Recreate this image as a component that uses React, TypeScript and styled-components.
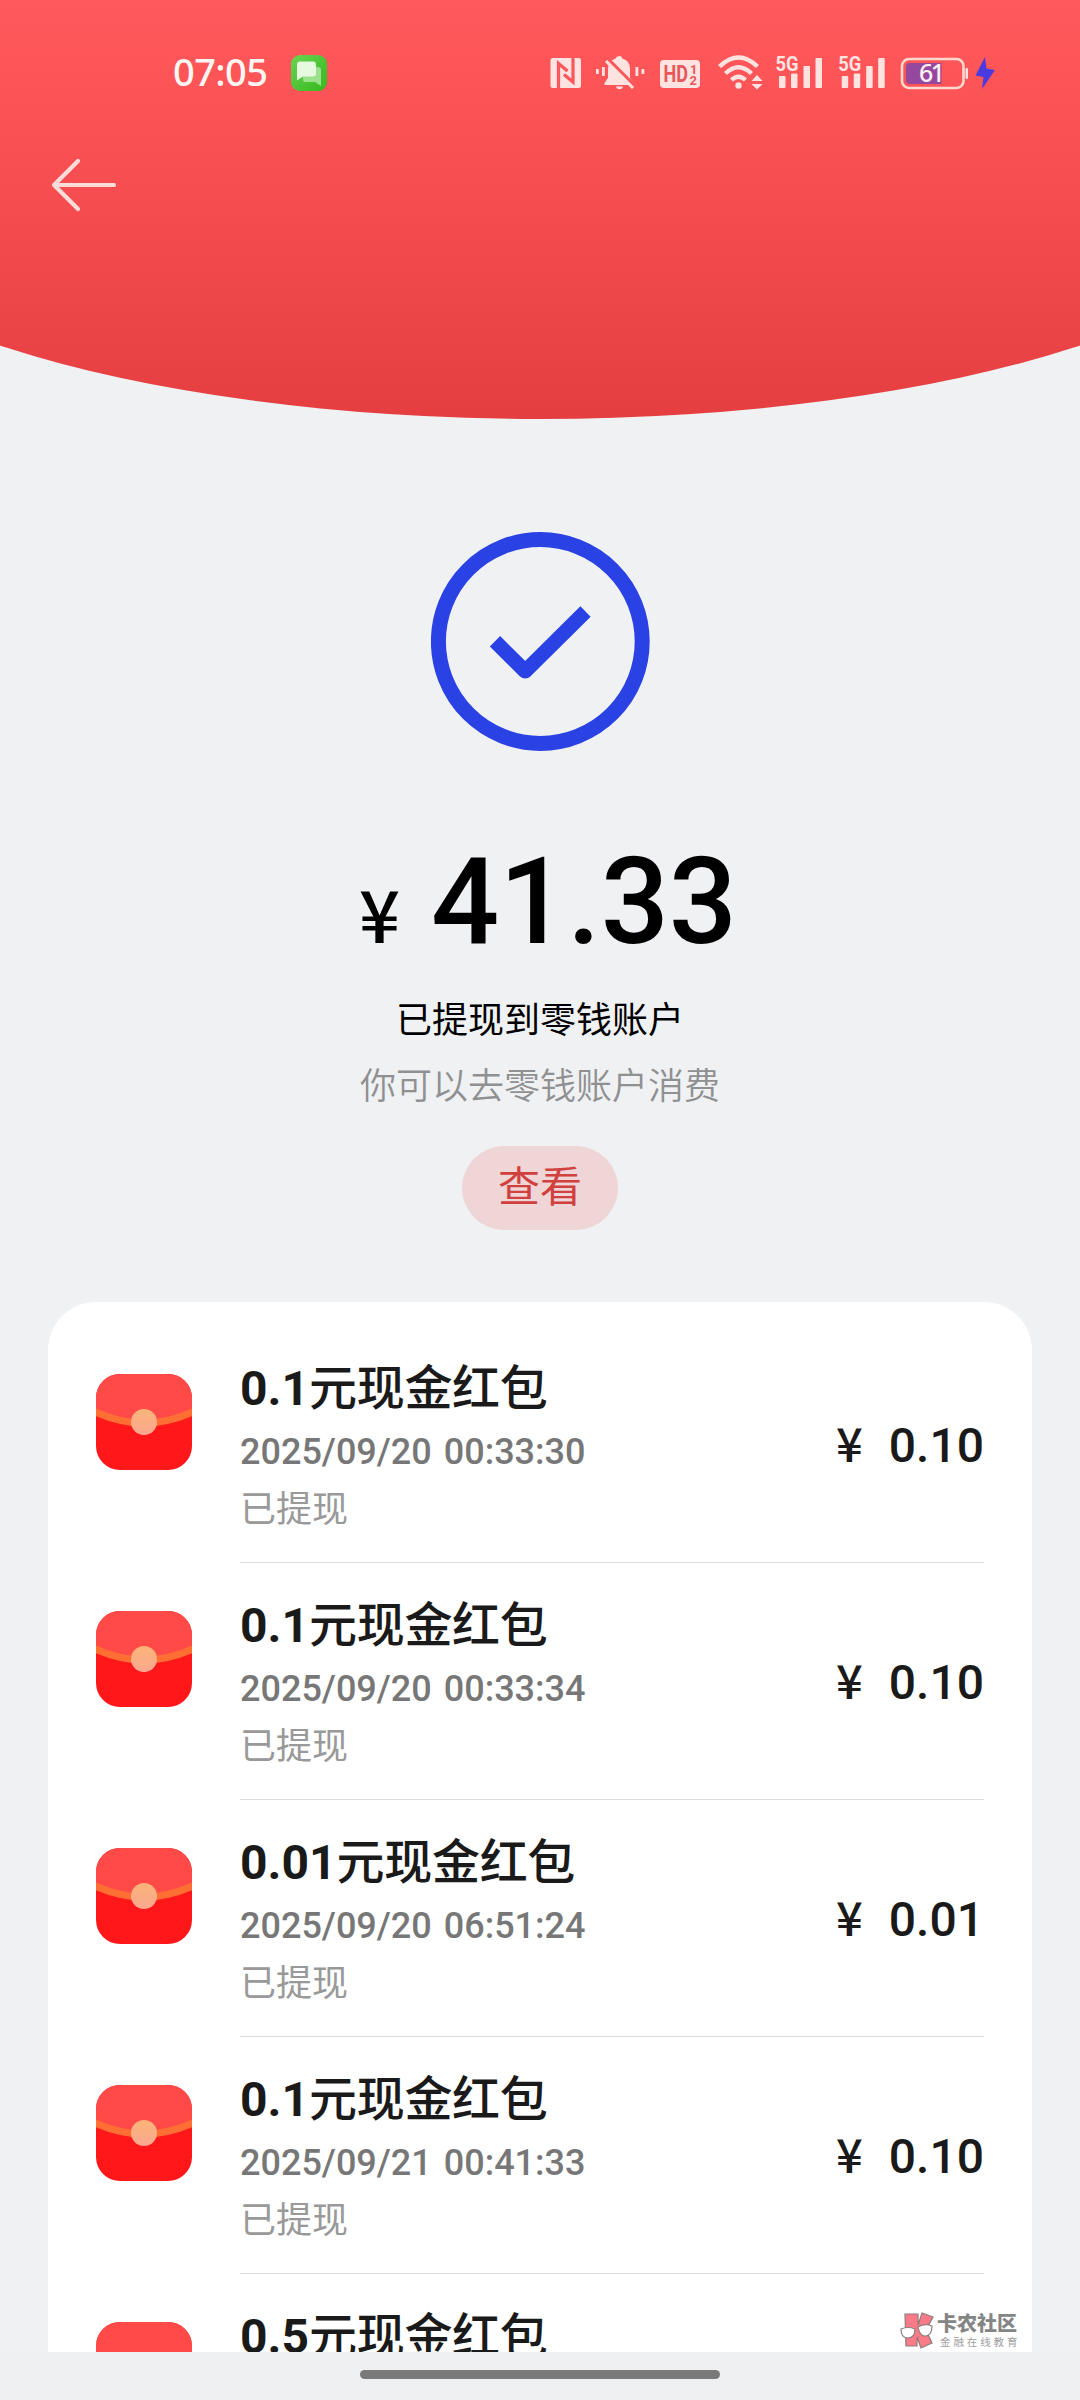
import React from 'react';
import styled, { createGlobalStyle } from 'styled-components';

const GlobalStyle = createGlobalStyle`
  * { box-sizing: border-box; }
  body {
    margin: 0;
    background: #eff0f2;
    font-family: Roboto, "Noto Sans CJK SC", sans-serif;
  }
`;

const Screen = styled.div`
  width: 1080px;
  height: 2400px;
  overflow: hidden;
  display: flex;
  flex-direction: column;
  background: #eff1f3;
`;

const Header = styled.header`
  width: 1512px;
  height: 419px;
  flex: none;
  margin-left: -216px;
  padding: 0 216px;
  background: linear-gradient(180deg, #ff595d 0%, #fd5457 20%, #e53e41 100%);
  border-radius: 0 0 756px 756px / 0 0 245px 245px;
`;

const StatusBar = styled.div`
  height: 145px;
  padding: 0 84px 0 173px;
  display: flex;
  align-items: center;
  justify-content: space-between;
`;

const StatusLeft = styled.div`
  display: flex;
  align-items: center;
  gap: 23px;
`;

const Clock = styled.span`
  width: 95px;
  padding-bottom: 3px;
  font: 500 38px/44px "Noto Sans", "Open Sans", sans-serif;
  letter-spacing: -0.6px;
  white-space: nowrap;
  color: #fff6f4;
`;

const BackButton = styled.button`
  display: flex;
  margin: 10px 0 0 48px;
  padding: 0;
  border: 0;
  background: none;
`;

const Result = styled.section`
  flex: none;
  height: 883px;
  padding-top: 113px;
  display: flex;
  flex-direction: column;
  align-items: center;
`;

const Amount = styled.div`
  display: flex;
  align-items: baseline;
  gap: 32px;
  margin-top: 81px;
  padding-left: 17px;
  line-height: 140px;
  height: 140px;
  font-weight: 500;
  color: #000;
`;

const Currency = styled.span`
  width: 39px;
  display: flex;
  justify-content: center;
  font-family: "Noto Sans CJK SC", sans-serif;
  font-size: 72px;
`;

const Value = styled.span`
  font-size: 120px;
`;

const Message = styled.p<{ $muted?: boolean }>`
  margin: ${(p) => (p.$muted ? 18 : 25)}px 0 0;
  font-size: 36px;
  line-height: 48px;
  font-weight: ${(p) => (p.$muted ? 350 : 400)};
  color: ${(p) => (p.$muted ? '#8f9091' : '#000')};
`;

const ViewButton = styled.button`
  width: 156px;
  height: 84px;
  margin-top: 35px;
  padding: 0;
  border: 0;
  border-radius: 42px;
  background: #efd5d6;
  color: #d0403f;
  font: 400 42px/60px Roboto, "Noto Sans CJK SC", sans-serif;
`;

const Card = styled.main`
  flex: none;
  height: 1050px;
  margin: 0 48px;
  padding: 24px 48px 0;
  overflow: hidden;
  background: #fff;
  border-radius: 48px 48px 0 0;
`;

const Row = styled.article`
  display: flex;
  gap: 48px;
  height: 237px;
`;

const PacketIcon = styled.svg`
  flex: none;
  width: 96px;
  height: 96px;
  margin-top: 48px;
`;

const RowBody = styled.div`
  flex: 1;
  display: flex;
  justify-content: space-between;
  border-bottom: 1px solid #dcdcdc;
`;

const Details = styled.div`
  display: flex;
  flex-direction: column;
  padding-top: 35px;
`;

const Title = styled.h2`
  margin: 0;
  font-size: 48px;
  line-height: 56px;
  font-weight: 500;
  letter-spacing: -0.3px;
  color: #1a1a1a;
`;

const TitleNumber = styled.span`
  font-weight: 700;
  letter-spacing: 0;
`;

const Time = styled.time`
  margin-top: 11px;
  font-size: 36px;
  line-height: 48px;
  font-weight: 500;
  word-spacing: 3px;
  color: #777;
`;

const State = styled.span`
  margin-top: 10px;
  font-size: 36px;
  line-height: 48px;
  color: #999;
`;

const Price = styled.div`
  display: flex;
  align-items: baseline;
  gap: 26px;
  height: 148px;
  padding-top: 88px;
  font-size: 48px;
  line-height: 56px;
  font-weight: 500;
  color: #1a1a1a;
`;

const PriceSign = styled.span`
  font-family: "Noto Sans CJK SC", sans-serif;
  font-size: 47px;
`;

const NavArea = styled.footer`
  flex: 1;
  display: flex;
  justify-content: center;
  padding-top: 18px;
  background: #eff0f2;
`;

const HomeIndicator = styled.div`
  width: 360px;
  height: 9px;
  border-radius: 5px;
  background: #797979;
`;

const Watermark = styled.div`
  position: absolute;
  left: 899px;
  top: 2312px;
  display: flex;
  gap: 2px;
`;

const WatermarkText = styled.div`
  display: flex;
  flex-direction: column;
  font-family: "Noto Sans CJK SC", sans-serif;
  white-space: nowrap;
`;

const Brand = styled.span`
  font-size: 20px;
  line-height: 21px;
  font-weight: 900;
  color: #858585;
`;

const Slogan = styled.span`
  margin: 1px 0 0 3px;
  font-size: 10.5px;
  line-height: 15px;
  letter-spacing: 2.9px;
  color: #a0a0a0;
`;

const MessageBadge = () => (
  <svg width="36" height="36" viewBox="0 0 36 36">
    <defs>
      <linearGradient id="badge" x1="0" y1="0" x2="1" y2="1">
        <stop offset="0" stopColor="#6bd352" />
        <stop offset="1" stopColor="#34b81d" />
      </linearGradient>
    </defs>
    <rect width="36" height="36" rx="9" fill="url(#badge)" />
    <path d="M14 12h13q3 0 3 3v16l-6-4H14q-2 0-2-2V14z" fill="#9be08c" />
    <path d="M9 6.500h13q3 0 3 3v9q0 3-3 3H12l-6 4V9.500q0-3 3-3z" fill="#e6fae0" />
  </svg>
);

/* Right-hand part of the status bar, drawn on a 446 x 40 strip. */
const StatusIcons = () => (
  <svg width="446" height="40" viewBox="550 52 446 40" fill="#ffe3e1">
    {/* NFC */}
    <rect x="550.500" y="57" width="30.500" height="30" rx="2.500" />
    <path d="M558.500 87V62.500L567.500 70M573 57V81L564 73.500" fill="none" stroke="#fb5659" strokeWidth="3.200" />

    {/* Muted bell with vibration marks */}
    <path d="M620 55q2 0 2.300 2.600 7.700 2 7.700 10.400v9l3.500 5v2h-29v-2l3.500-5v-9q0-8.400 7.700-10.400Q616 55 620 55z" />
    <path d="M616 85.500h7q-.5 2.700-3.500 2.700t-3.500-2.700z" />
    <path d="M607.500 57.500l28 28" stroke="#fb5659" strokeWidth="3.200" />
    <path d="M606 60l27 27" stroke="#ffe3e1" strokeWidth="3" />
    <rect x="596" y="68" width="2.800" height="5" />
    <rect x="602" y="66" width="2.800" height="9" />
    <rect x="635.500" y="66" width="2.800" height="9" />
    <rect x="641.500" y="68" width="2.800" height="5" />

    {/* HD voice */}
    <rect x="660" y="59" width="40" height="28" rx="4" />
    <text x="663.500" y="81" fontFamily="Roboto, sans-serif" fontSize="23" fontWeight="700" textLength="24.500" lengthAdjust="spacingAndGlyphs" fill="#e8575a">HD</text>
    <text x="690" y="72.500" fontFamily="Roboto, sans-serif" fontSize="13" fontWeight="700" fill="#e8575a">1</text>
    <text x="689.500" y="84" fontFamily="Roboto, sans-serif" fontSize="13" fontWeight="700" fill="#e8575a">2</text>

    {/* Wi-Fi */}
    <g fill="none" stroke="#ffe3e1" strokeWidth="4.400">
      <path d="M719.500 65.500Q738.500 47.500 757.500 65.500" />
      <path d="M725.500 72.500Q738.500 60 751.500 72.500" />
      <path d="M731.500 79Q738.500 72.500 745.500 79" />
    </g>
    <circle cx="738.500" cy="84.500" r="3.200" />
    <path d="M757 74l5.500 6h-11zM757 88.500l-5.500-5.500h11z" />

    {/* Mobile signal, both SIMs */}
    {[0, 62.7].map((dx) => (
      <g key={dx} transform={`translate(${dx} 0)`}>
        <text x="775.500" y="70" fontFamily="Roboto, sans-serif" fontSize="20.500" fontWeight="700" textLength="23" lengthAdjust="spacingAndGlyphs">5G</text>
        <rect x="779" y="75" width="6.500" height="12" rx="1" />
        <rect x="791" y="72.500" width="6.500" height="14.500" rx="1" />
        <rect x="803.500" y="65" width="6.500" height="22" rx="1" />
        <rect x="815.500" y="57" width="6.500" height="30" rx="1" />
      </g>
    ))}

    {/* Battery */}
    <rect x="902" y="58" width="61.500" height="29" rx="7" fill="none" stroke="#ffd9cf" strokeWidth="2.600" />
    <path d="M910 62h31.500v21H910q-4 0-4-4V66q0-4 4-4z" fill="#96489f" />
    <rect x="965.500" y="67" width="2.500" height="11" rx="1" />
    <text x="919" y="81.300" fontFamily="'Noto Sans', sans-serif" fontSize="25" fontWeight="500" textLength="26" fill="#fff0f4">61</text>
    <path d="M985 56l-9.500 18.500 8 1.500-1.500 12L995 69l-8.500-1.500z" fill="#4a3be0" />
  </svg>
);

const RedPacket = () => (
  <PacketIcon viewBox="0 0 96 96">
    <defs>
      <clipPath id="packet">
        <rect width="96" height="96" rx="24" />
      </clipPath>
      <linearGradient id="clasp" x1="0" y1="0" x2="0" y2="1">
        <stop offset="0" stopColor="#f9b478" />
        <stop offset="1" stopColor="#fba890" />
      </linearGradient>
    </defs>
    <g clipPath="url(#packet)">
      <rect width="96" height="96" fill="#ff171a" />
      <path d="M0 0H96V38Q48 61 0 38z" fill="#ff4a48" />
      <path d="M-2 37.500Q48 60.500 98 37.500" fill="none" stroke="#ff6f33" strokeWidth="7" />
      <circle cx="48" cy="48" r="13" fill="url(#clasp)" />
    </g>
  </PacketIcon>
);

const records = [
  { value: '0.1', time: '2025/09/20 00:33:30', price: '0.10' },
  { value: '0.1', time: '2025/09/20 00:33:34', price: '0.10' },
  { value: '0.01', time: '2025/09/20 06:51:24', price: '0.01' },
  { value: '0.1', time: '2025/09/21 00:41:33', price: '0.10' },
  { value: '0.5', time: '', price: '' },
];

export default function App() {
  return (
    <Screen>
      <GlobalStyle />
      <Header>
        <StatusBar>
          <StatusLeft>
            <Clock>07:05</Clock>
            <MessageBadge />
          </StatusLeft>
          <StatusIcons />
        </StatusBar>
        <BackButton aria-label="back">
          <svg width="72" height="60" viewBox="0 0 72 60" fill="none" stroke="#ffdcda" strokeWidth="4.200" strokeLinecap="round" strokeLinejoin="round">
            <path d="M66 30H6M30 6L6 30l24 24" />
          </svg>
        </BackButton>
      </Header>

      <Result>
        <svg width="219" height="219" viewBox="0 0 219 219" fill="none" stroke="#2a41e3" strokeWidth="15">
          <circle cx="109.300" cy="109.500" r="101.900" />
          <path d="M64 109.300L94.200 139.200L154.500 79.500" strokeWidth="14.600" strokeLinejoin="round" />
        </svg>
        <Amount>
          <Currency>¥</Currency>
          <Value>41.33</Value>
        </Amount>
        <Message>已提现到零钱账户</Message>
        <Message $muted>你可以去零钱账户消费</Message>
        <ViewButton>查看</ViewButton>
      </Result>

      <Card>
        {records.map((r, i) => (
          <Row key={i}>
            <RedPacket />
            <RowBody>
              <Details>
                <Title>
                  <TitleNumber>{r.value}</TitleNumber>元现金红包
                </Title>
                {r.time && <Time>{r.time}</Time>}
                {r.time && <State>已提现</State>}
              </Details>
              {r.price && (
                <Price>
                  <PriceSign>¥</PriceSign>
                  <span>{r.price}</span>
                </Price>
              )}
            </RowBody>
          </Row>
        ))}
      </Card>

      <NavArea>
        <HomeIndicator />
      </NavArea>

      <Watermark>
        <svg width="36" height="38" viewBox="0 0 36 38" stroke="#8c7c7c" strokeWidth="1.200">
          <path d="M6 2H19V13L23 1l11 4-7 13 6 13-11 5-4-11v9H7z" fill="#fb7a87" />
          <path d="M2 17q7-3 14 0 0 9-7 9t-7-9zM19 15q7-4 14-1 0 9-6 10-6 1-8-9z" fill="#fff" />
        </svg>
        <WatermarkText>
          <Brand>卡农社区</Brand>
          <Slogan>金融在线教育</Slogan>
        </WatermarkText>
      </Watermark>
    </Screen>
  );
}
